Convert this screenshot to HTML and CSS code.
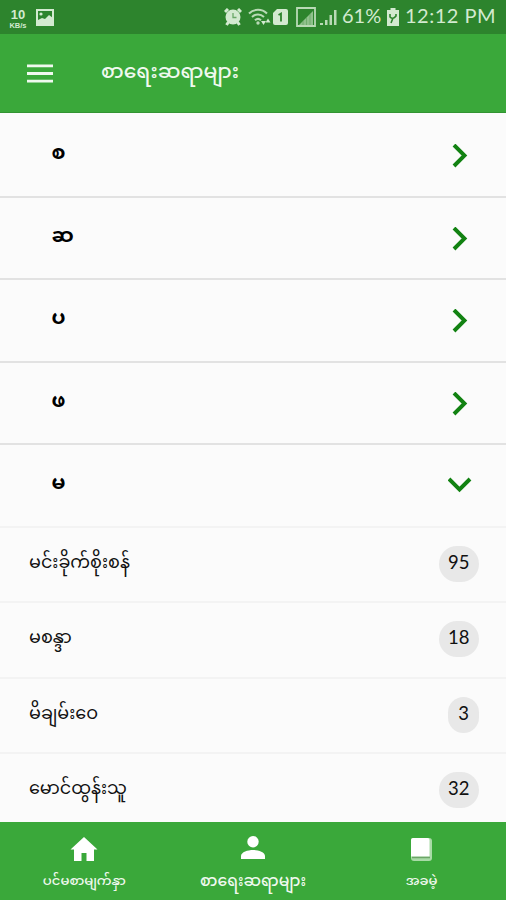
FILE: index.html
```html
<!DOCTYPE html>
<html lang="my">
<head>
<meta charset="utf-8">
<title>စာရေးဆရာများ</title>
<link rel="stylesheet" href="styles.css">
</head>
<body>
<div class="status">
  <div class="rate"><b>10</b><span>KB/s</span></div>
  <svg class="photo" width="18" height="17" viewBox="0 0 18 17"><path fill="none" stroke="#d3ead0" stroke-width="2" d="M1 1h16v15H1z"/><path fill="#d3ead0" d="M2 15v-4l4-2 3 1 4-4 4 3v6z"/><circle cx="5" cy="5" r="1.600" fill="#d3ead0"/></svg>
  <span class="fill"></span>
  <svg class="alarm" width="18" height="18" viewBox="0 0 18 18"><circle cx="9" cy="9" r="7.500" fill="#d3ead0"/><path stroke="#d3ead0" stroke-width="3" d="M1 4l3-3M17 4l-3-3M2.500 17l2-3M15.500 17l-2-3"/><path fill="none" stroke="#6aa868" stroke-width="1.300" d="M9 5v4.500h3.500"/></svg>
  <svg class="wifi" width="23" height="18" viewBox="0 0 23 18"><g fill="none" stroke="#b9dab6" stroke-width="2"><path d="M1 5.500C6 .5 14 .5 19 5.500M4 9c3.500-3.500 8.500-3.500 12 0M7 12.200c2-1.800 4-1.800 6 0"/></g><circle cx="10" cy="15" r="1.700" fill="#b9dab6"/><path fill="#d3ead0" d="M13 13h5l-2.500 4zM17.500 14.500h5L20 10.500z"/></svg>
  <svg class="sim" width="15" height="18" viewBox="0 0 15 18"><path fill="#d3ead0" d="M4 1h9q2 0 2 2v12q0 2-2 2H2q-2 0-2-2V5z"/><path fill="none" stroke="#2d842d" stroke-width="1.800" d="M5.500 7L8 5.500V13.500"/></svg>
  <svg class="box" width="20" height="20" viewBox="0 0 20 20"><path fill="none" stroke="#b9dab6" stroke-width="1.800" d="M1 1h18v18H1z"/><path fill="#8fc18c" d="M3 18L17 4v14z"/><path stroke="#5b9f59" stroke-width=".6" d="M7 14v4M10.500 10v8M14 7v11"/></svg>
  <svg class="bars" width="17" height="18" viewBox="0 0 17 18"><path fill="#b9dab6" d="M0 15h3v2H0zM5 12h2.500v5H5zM9.500 7H12v10H9.500zM14 2h2.500v15H14z"/></svg>
  <span class="pct">61%</span>
  <svg class="battery" width="12" height="18" viewBox="0 0 12 18"><path fill="#d3ead0" d="M3.500 0h5v2H12v16H0V2h3.500z"/><path fill="none" stroke="#2d842d" stroke-width="1.600" d="M3 6v3q3 3 6-1V6M6 10l-2 5"/></svg>
  <span class="time">12:12 PM</span>
</div>
<header class="bar">
  <svg width="26" height="19" viewBox="0 0 26 19"><path stroke="#f0f9ef" stroke-width="2.800" d="M0 1.900h26M0 9.500h26M0 17.100h26"/></svg>
  <h1>စာရေးဆရာများ</h1>
</header>
<main>
  <div class="group"><span>စ</span><svg class="chev" viewBox="0 0 24 24"><path d="M6 1l10.500 10.500L6 22"/></svg></div>
  <div class="group"><span>ဆ</span><svg class="chev" viewBox="0 0 24 24"><path d="M6 1l10.500 10.500L6 22"/></svg></div>
  <div class="group"><span>ပ</span><svg class="chev" viewBox="0 0 24 24"><path d="M6 1l10.500 10.500L6 22"/></svg></div>
  <div class="group"><span>ဖ</span><svg class="chev" viewBox="0 0 24 24"><path d="M6 1l10.500 10.500L6 22"/></svg></div>
  <div class="group open"><span>မ</span><svg class="chev" viewBox="0 0 24 24"><path d="M1 5l10.500 10.500L22 5"/></svg></div>
  <div class="author"><span>မင်းခိုက်စိုးစန်</span><b>95</b></div>
  <div class="author"><span>မစန္ဒာ</span><b>18</b></div>
  <div class="author"><span>မိချမ်းဝေ</span><b>3</b></div>
  <div class="author"><span>မောင်ထွန်းသူ</span><b>32</b></div>
</main>
<nav>
  <div class="tab"><svg width="28" height="26" viewBox="0 0 28 26"><path fill="#fff" d="M14 1L.5 13.500H4V25h7.500v-8h5v8H24V13.500h3.500z"/></svg><span>ပင်မစာမျက်နှာ</span></div>
  <div class="tab active"><svg width="28" height="26" viewBox="0 0 28 26"><circle cx="14" cy="5.700" r="5.700" fill="#fff"/><path fill="#fff" d="M2 23v-3c0-4 7-6 12-6s12 2 12 6v3z"/></svg><span>စာရေးဆရာများ</span></div>
  <div class="tab"><svg width="28" height="26" viewBox="0 0 28 26"><path fill="#a9dba7" d="M6 2h15q3 0 3 3v17q0 3-3 3H6q-3 0-3-3V5q0-3 3-3z"/><path fill="#fff" d="M5 2h14.500q2 0 2 2v16.500H3V4q0-2 2-2z"/><path stroke="#6da568" stroke-width="1.500" d="M4 21.500h18"/></svg><span>အခမဲ့</span></div>
</nav>
</body>
</html>
```
FILE: styles.css
```css
* { box-sizing: border-box; }
body {
  margin: 0;
  height: 900px;
  overflow: hidden;
  display: flex;
  flex-direction: column;
  background: #fbfbfb;
  color: #111;
  font-family: "Noto Sans Myanmar", "Noto Sans", sans-serif;
}
svg { flex: none; display: block; }
.status {
  height: 34px;
  flex: none;
  display: flex;
  align-items: center;
  padding: 0 10px 0 8px;
  background: #2d842d;
  color: #d3ead0;
  font: 20px/34px Lato, sans-serif;
}
.rate {
  width: 20px;
  display: flex;
  flex-direction: column;
  align-items: center;
  padding-top: 4px;
  font-family: "Liberation Sans", sans-serif;
}
.rate b { font-size: 13px; line-height: 13px; }
.rate span { font-size: 7.5px; line-height: 9px; font-weight: bold; }
.photo { margin-left: 8px; }
.fill { flex: 1; }
.wifi { margin-left: 6px; }
.sim { margin-left: 2px; }
.box { margin-left: 8px; }
.bars { margin-left: 4px; }
.pct { width: 41px; margin: -4px 0 0 5px; white-space: nowrap; }
.battery { margin-left: 4px; }
.time { width: 91px; margin: -4px 0 0 6px; white-space: nowrap; letter-spacing: .5px; }
.bar {
  height: 79px;
  flex: none;
  display: flex;
  align-items: center;
  padding-left: 27px;
  background: #3aa83a;
  border-bottom: 1px solid #329432;
}
.bar h1 {
  margin: 0 0 0 48px;
  font-size: 20.3px;
  line-height: 40px;
  font-weight: 500;
  color: #f0f9ef;
}
main { flex: none; height: 709px; padding-top: 2px; overflow: hidden; }
.group {
  height: 82.5px;
  display: flex;
  align-items: center;
  justify-content: space-between;
  padding: 0 34px 0 51.5px;
  border-bottom: 2px solid #e2e2e2;
  font-size: 20px;
  font-weight: bold;
  color: #000;
}
.group span { padding-bottom: 1px; }
.open { border-bottom-color: #f3f3f3; }
.chev { width: 24px; height: 24px; margin-top: 2px; fill: none; stroke: #128212; stroke-width: 3.9; }
.author {
  height: 75.5px;
  display: flex;
  align-items: center;
  justify-content: space-between;
  padding: 0 27px 1px 29px;
  border-bottom: 2px solid #f3f3f3;
  font-size: 17.6px;
}
.author:last-child { border-bottom-color: transparent; }
.author b {
  height: 36px;
  min-width: 31px;
  padding: 0 9.5px;
  border-radius: 20px;
  background: #e8e8e8;
  text-align: center;
  font: 18.5px/33px Lato, sans-serif;
}
nav {
  flex: 1;
  display: grid;
  grid-template-columns: repeat(3, 1fr);
  background: #3aa83a;
  color: #f0f9ef;
}
.tab {
  display: flex;
  flex-direction: column;
  align-items: center;
  padding-top: 14px;
  font-size: 13.2px;
  font-weight: 500;
  line-height: 24px;
}
.tab span { margin-top: 8px; }
.active { font-size: 15.6px; }
```
